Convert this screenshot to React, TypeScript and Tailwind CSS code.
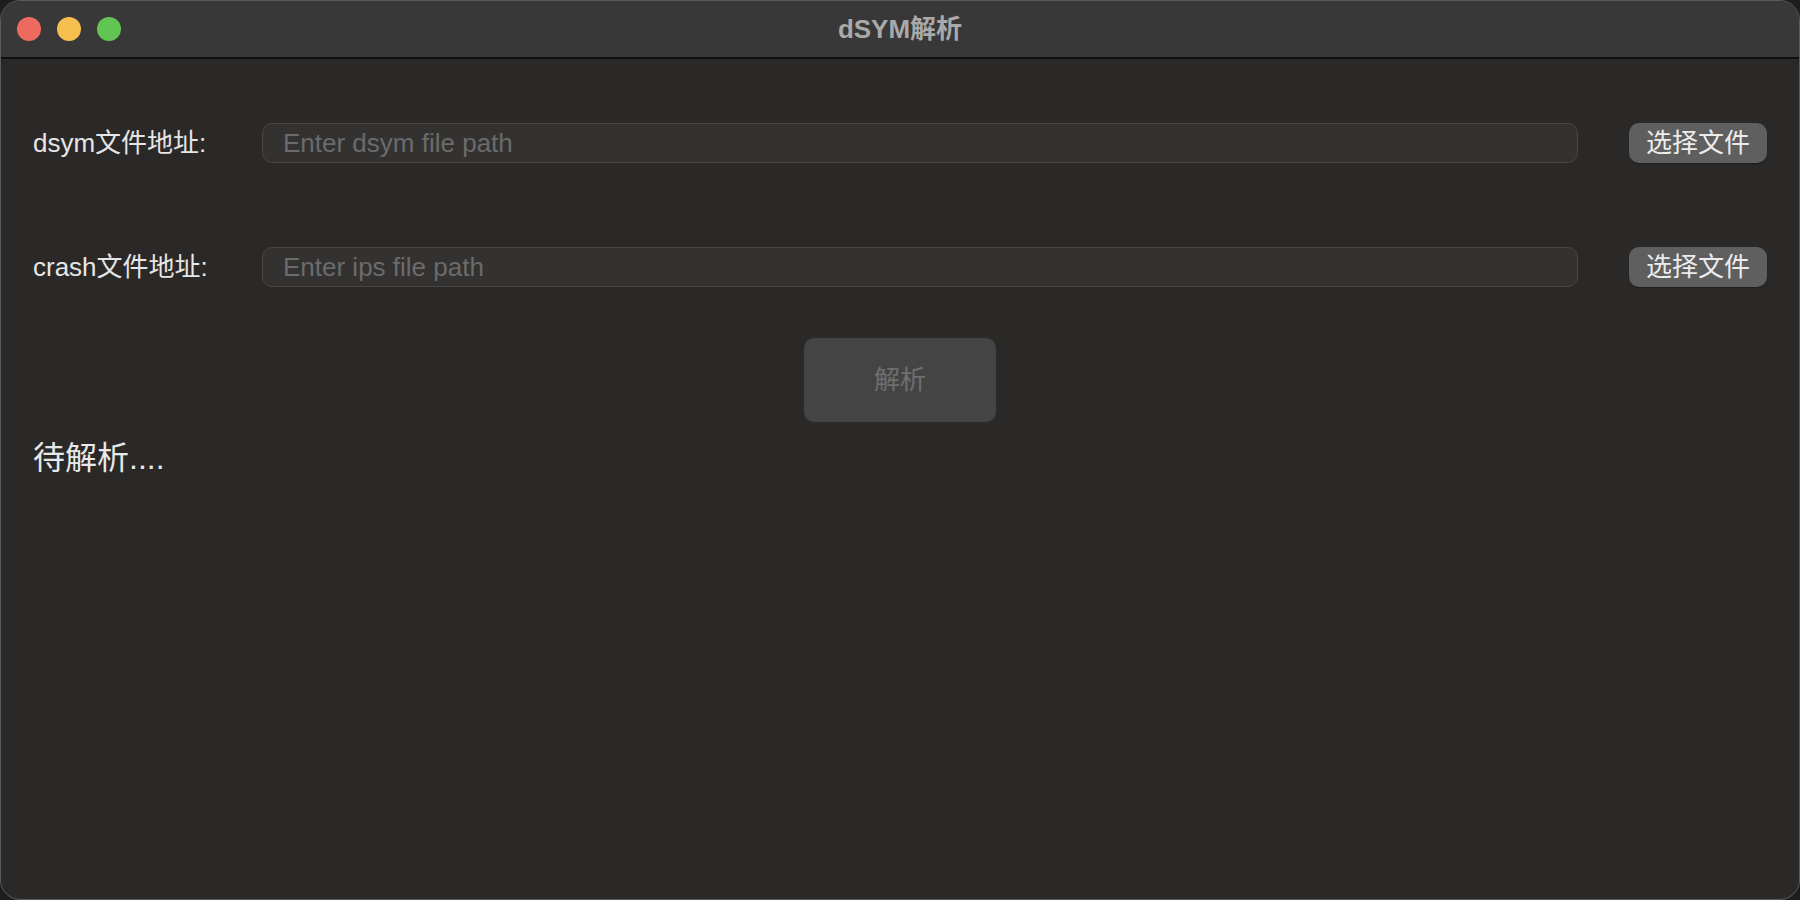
import React from 'react';

const FONT = { fontFamily: '"Liberation Sans", "Noto Sans CJK SC", sans-serif' };

const TrafficLights: React.FC = () => (
  <div className="absolute left-4 top-4 flex gap-4">
    <div className="w-6 h-6 rounded-full bg-[#ed6a5e]"></div>
    <div className="w-6 h-6 rounded-full bg-[#f5bf4f]"></div>
    <div className="w-6 h-6 rounded-full bg-[#61c554]"></div>
  </div>
);

interface PathRowProps {
  label: string;
  placeholder: string;
}

const PathRow: React.FC<PathRowProps> = ({ label, placeholder }) => (
  <div className="flex items-center h-10">
    <span className="w-[229px] shrink-0 text-[26px] text-[#e6e6e6]">{label}</span>
    <input
      className="flex-1 h-10 rounded-[10px] bg-[#333231] border border-[#474645] px-5 text-[26px] text-[#e6e6e6] placeholder:text-[#6b6b6b] outline-none"
      placeholder={placeholder}
      style={FONT}
    />
    <button
      className="ml-[51px] w-[138px] h-10 rounded-[10px] bg-[#5f5f5f] text-[26px] text-[#ececec] shadow-[0_1px_1px_rgba(0,0,0,0.3)]"
      style={FONT}
    >
      选择文件
    </button>
  </div>
);

const App: React.FC = () => {
  return (
    <div className="w-[1800px] h-[900px] bg-[#1d1d1f]" style={FONT}>
      <div className="relative w-full h-full rounded-[20px] border border-[#5a5a5a] overflow-hidden flex flex-col bg-[#2a2928]">
        {/* Title bar */}
        <div className="relative h-[58px] shrink-0 bg-[#383838] border-b-2 border-[#0f0f0f] flex items-center justify-center">
          <TrafficLights />
          <span className="text-[26px] font-bold text-[#a9a9a9]">dSYM解析</span>
        </div>

        {/* Content */}
        <div className="flex flex-col pl-8 pr-8 pt-[64px]">
          <PathRow label="dsym文件地址:" placeholder="Enter dsym file path" />
          <div className="h-[84px]"></div>
          <PathRow label="crash文件地址:" placeholder="Enter ips file path" />

          <div className="flex justify-center mt-[51px]">
            <button className="w-[192px] h-[84px] rounded-[10px] bg-[#454444] text-[26px] text-[#6f6f6f]" style={FONT}>
              解析
            </button>
          </div>

          <div className="mt-[12px] text-[32px] text-[#e8e8e8]">待解析....</div>
        </div>
      </div>
    </div>
  );
};

export default App;
